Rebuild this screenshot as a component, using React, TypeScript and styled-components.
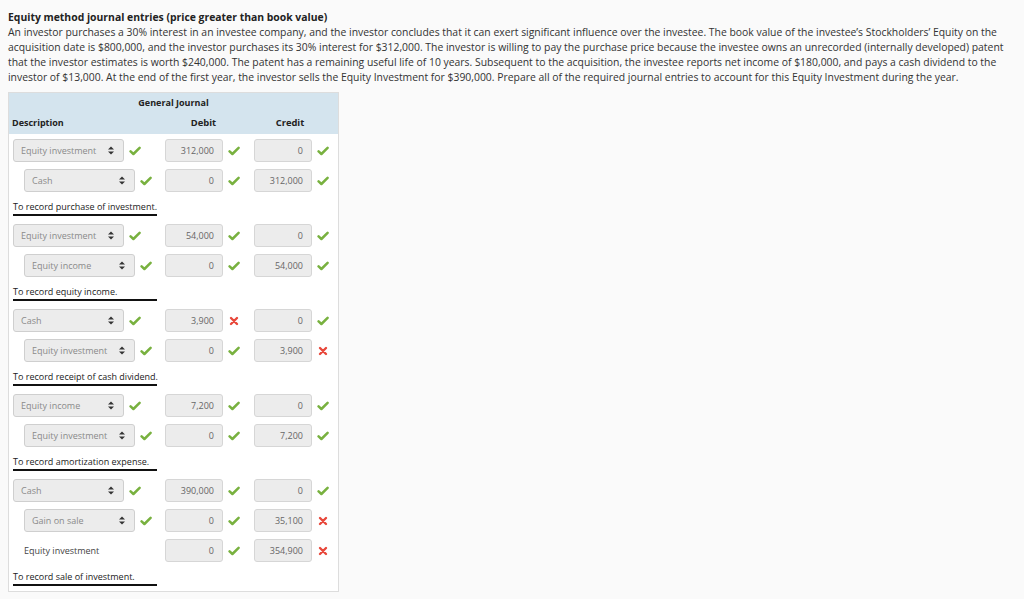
import React from "react";
import styled, { createGlobalStyle } from "styled-components";

const GlobalStyle = createGlobalStyle`
  html, body {
    margin: 0;
    padding: 0;
    background: #fafafa;
  }
  body {
    font-family: "Open Sans", "DejaVu Sans", sans-serif;
    color: #333333;
  }
`;

type Row = {
  account: string;
  indent?: boolean;
  plain?: boolean;
  debit: string;
  debitOk: boolean;
  credit: string;
  creditOk: boolean;
};

type Entry = {
  rows: Row[];
  memo: string;
};

const entries: Entry[] = [
  {
    rows: [
      { account: "Equity investment", debit: "312,000", debitOk: true, credit: "0", creditOk: true },
      { account: "Cash", indent: true, debit: "0", debitOk: true, credit: "312,000", creditOk: true },
    ],
    memo: "To record purchase of investment.",
  },
  {
    rows: [
      { account: "Equity investment", debit: "54,000", debitOk: true, credit: "0", creditOk: true },
      { account: "Equity income", indent: true, debit: "0", debitOk: true, credit: "54,000", creditOk: true },
    ],
    memo: "To record equity income.",
  },
  {
    rows: [
      { account: "Cash", debit: "3,900", debitOk: false, credit: "0", creditOk: true },
      { account: "Equity investment", indent: true, debit: "0", debitOk: true, credit: "3,900", creditOk: false },
    ],
    memo: "To record receipt of cash dividend.",
  },
  {
    rows: [
      { account: "Equity income", debit: "7,200", debitOk: true, credit: "0", creditOk: true },
      { account: "Equity investment", indent: true, debit: "0", debitOk: true, credit: "7,200", creditOk: true },
    ],
    memo: "To record amortization expense.",
  },
  {
    rows: [
      { account: "Cash", debit: "390,000", debitOk: true, credit: "0", creditOk: true },
      { account: "Gain on sale", indent: true, debit: "0", debitOk: true, credit: "35,100", creditOk: false },
      { account: "Equity investment", indent: true, plain: true, debit: "0", debitOk: true, credit: "354,900", creditOk: false },
    ],
    memo: "To record sale of investment.",
  },
];

const Page = styled.div`
  padding: 10px 8px 0 8px;
  font-size: 10.4px;
  line-height: 15px;
`;

const Title = styled.div`
  font-weight: 700;
  color: #222222;
`;

const Problem = styled.div`
  color: #333333;
  margin-bottom: 7px;
  white-space: nowrap;
`;

const Journal = styled.div`
  width: 329px;
  background: #ffffff;
  border: 1px solid #dddddd;
  padding-bottom: 5px;
  font-size: 9px;
`;

const Header = styled.div`
  background: #d4e4ee;
  font-weight: 700;
  color: #222222;
  padding-bottom: 1px;
`;

const HeaderTitle = styled.div`
  text-align: center;
  height: 20px;
  line-height: 20px;
`;

const Grid = styled.div`
  display: grid;
  grid-template-columns: 152px 89px 1fr;
  padding-left: 4px;
`;

const HeaderCell = styled.div<{ $align?: string }>`
  height: 20px;
  line-height: 20px;
  font-size: ${(p) => (p.$align === "left" ? "9px" : "9.4px")};
  text-align: ${(p) => p.$align || "center"};
  padding-right: ${(p) => (p.$align === "left" ? "0" : "12px")};
  margin-left: ${(p) => (p.$align === "left" ? "-1px" : "0")};
`;

const Body = styled.div`
  padding-top: 5px;
`;

const Group = styled.div`
  margin-bottom: 8px;
  &:last-child {
    margin-bottom: 0;
  }
`;

const EntryRow = styled(Grid)`
  height: 23px;
  margin-bottom: 7px;
`;

const Cell = styled.div<{ $indent?: boolean }>`
  display: flex;
  align-items: center;
  gap: 5px;
  padding-left: ${(p) => (p.$indent ? "11px" : "0")};
`;

const Select = styled.div`
  box-sizing: border-box;
  width: 111px;
  height: 23px;
  background: #ececec;
  border: 1px solid #cfcfcf;
  border-radius: 3px;
  display: flex;
  align-items: center;
  justify-content: space-between;
  padding: 0 9px 0 7px;
  color: #8a8a8a;
`;

const PlainAccount = styled.div`
  color: #444444;
`;

const Amount = styled.div`
  box-sizing: border-box;
  width: 58px;
  height: 23px;
  background: #ececec;
  border: 1px solid #d6d6d6;
  border-radius: 3px;
  display: flex;
  align-items: center;
  justify-content: flex-end;
  padding-right: 8px;
  color: #666666;
`;

const Memo = styled.div`
  width: 144px;
  margin-left: 4px;
  color: #222222;
  line-height: 15px;
  white-space: nowrap;
  border-bottom: 2px solid #111111;
`;

const IconBox = styled.span`
  display: inline-flex;
  width: 12px;
  justify-content: center;
`;

const Arrows = () => (
  <svg width="6" height="9" viewBox="0 0 6 9">
    <polygon points="0,3.6 3,0.4 6,3.6" fill="#333" />
    <polygon points="0,5.4 3,8.6 6,5.4" fill="#333" />
  </svg>
);

const Mark = ({ ok }: { ok: boolean }) => (
  <IconBox>
    {ok ? (
      <svg width="12" height="10" viewBox="0 0 12 10">
        <path d="M1.6 5.4 L4.4 8 L10.6 1.8" fill="none" stroke="#78b13f" strokeWidth="2.5" strokeLinecap="round" strokeLinejoin="round" />
      </svg>
    ) : (
      <svg width="10" height="10" viewBox="0 0 10 10">
        <path d="M2 2 L8 8 M8 2 L2 8" fill="none" stroke="#e8473a" strokeWidth="2.4" strokeLinecap="round" />
      </svg>
    )}
  </IconBox>
);

const JournalRow = ({ row }: { row: Row }) => (
  <EntryRow>
    <Cell $indent={row.indent}>
      {row.plain ? (
        <PlainAccount>{row.account}</PlainAccount>
      ) : (
        <>
          <Select>
            <span>{row.account}</span>
            <Arrows />
          </Select>
          <Mark ok={true} />
        </>
      )}
    </Cell>
    <Cell>
      <Amount>{row.debit}</Amount>
      <Mark ok={row.debitOk} />
    </Cell>
    <Cell>
      <Amount>{row.credit}</Amount>
      <Mark ok={row.creditOk} />
    </Cell>
  </EntryRow>
);

export default function App() {
  return (
    <>
      <GlobalStyle />
      <Page>
        <Title>Equity method journal entries (price greater than book value)</Title>
        <Problem>
          An investor purchases a 30% interest in an investee company, and the investor concludes that it can exert significant influence over the investee. The book value of the investee’s Stockholders’ Equity on the
          <br />
          acquisition date is $800,000, and the investor purchases its 30% interest for $312,000. The investor is willing to pay the purchase price because the investee owns an unrecorded (internally developed) patent
          <br />
          that the investor estimates is worth $240,000. The patent has a remaining useful life of 10 years. Subsequent to the acquisition, the investee reports net income of $180,000, and pays a cash dividend to the
          <br />
          investor of $13,000. At the end of the first year, the investor sells the Equity Investment for $390,000. Prepare all of the required journal entries to account for this Equity Investment during the year.
        </Problem>
        <Journal>
          <Header>
            <HeaderTitle>General Journal</HeaderTitle>
            <Grid>
              <HeaderCell $align="left">Description</HeaderCell>
              <HeaderCell>Debit</HeaderCell>
              <HeaderCell>Credit</HeaderCell>
            </Grid>
          </Header>
          <Body>
            {entries.map((entry, i) => (
              <Group key={i}>
                {entry.rows.map((row, j) => (
                  <JournalRow key={j} row={row} />
                ))}
                <Memo>{entry.memo}</Memo>
              </Group>
            ))}
          </Body>
        </Journal>
      </Page>
    </>
  );
}
